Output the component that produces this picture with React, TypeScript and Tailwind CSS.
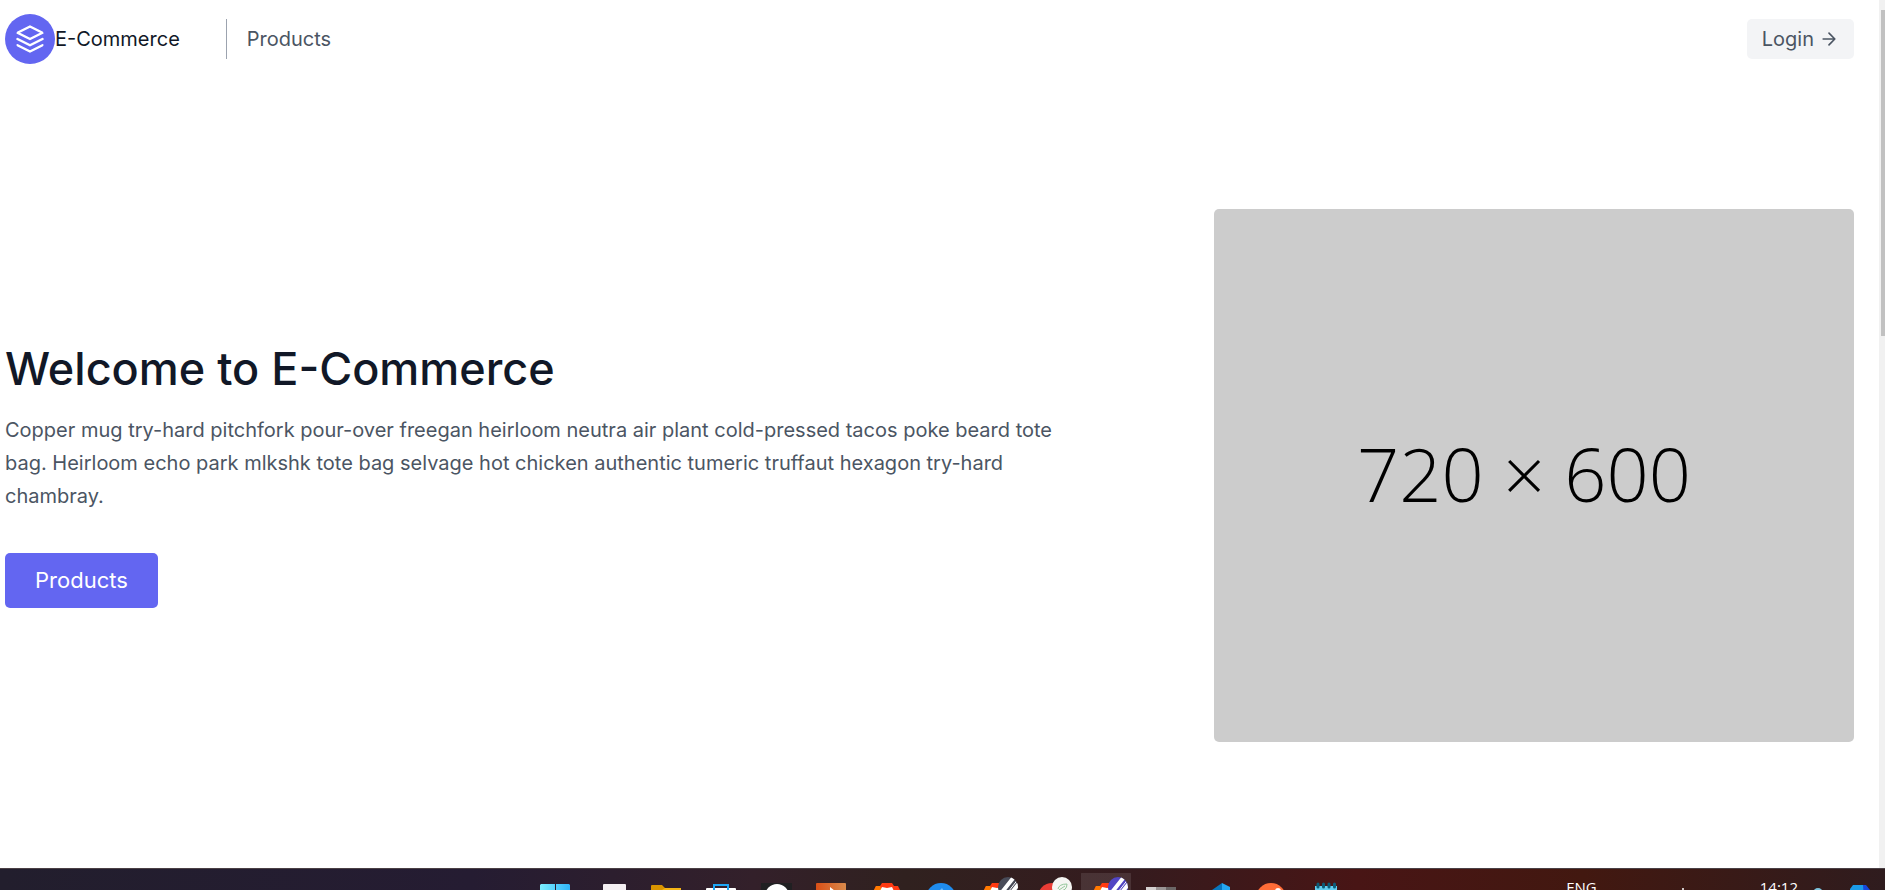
import type { ReactNode } from "react";

function Icon({ children }: { children: ReactNode }) {
  return (
    <svg width="50" height="50" viewBox="0 0 50 50" aria-hidden="true">
      {children}
    </svg>
  );
}

function Brave() {
  return (
    <g transform="translate(1 0)">
      <path d="M12 21l2-4h4l2-3h10l2 3h4l2 4-3 18-10 8-10-8z" fill="#ff3a12" />
      <path d="M12 21l2-4h4l2 4-6 4z" fill="#ff7a00" />
      <path d="M18 22l2-4 5 1 5-1 2 4-2 12-5 5-5-5z" fill="#fff" />
    </g>
  );
}

function StripedBadge({ id, color }: { id: string; color: string }) {
  return (
    <>
      <clipPath id={id}>
        <circle cx="37" cy="18" r="10" />
      </clipPath>
      <g clipPath={`url(#${id})`}>
        <rect x="27" y="8" width="20" height="20" fill={color} />
        <path d="M28 27L43 8M38 27L50 12" stroke="#fff" strokeWidth="4" />
        <path d="M34 27L48 9" stroke="#fff" strokeWidth="1" />
      </g>
    </>
  );
}

const apps: { name: string; active?: boolean; art: ReactNode }[] = [
  {
    name: "Start",
    art: (
      <>
        <defs>
          <linearGradient id="win" x1="0" x2="1">
            <stop offset="0" stopColor="#7df0ff" />
            <stop offset="1" stopColor="#30b5f8" />
          </linearGradient>
        </defs>
        <path d="M10 15h14v14H9V16zM25 15h13l1 1v13H25z" fill="url(#win)" />
      </>
    ),
  },
  { name: "Task view", art: <rect x="17" y="15" width="23" height="23" rx="1" fill="#f4eff2" /> },
  {
    name: "Files",
    art: (
      <>
        <path d="M10 17q0-1 1-1h10l3 3h15q1 0 1 2v18H10z" fill="#d99400" />
        <path d="M10 21h11l3-2h16v20H10z" fill="#f5b516" />
      </>
    ),
  },
  {
    name: "Store",
    art: (
      <>
        <path d="M10 20q0-1 1-1h28q1 0 1 1v20H10z" fill="#fff" />
        <path d="M18 21v-5h14v5" fill="none" stroke="#1ea7f5" strokeWidth="2" />
      </>
    ),
  },
  {
    name: "Chat",
    art: (
      <>
        <rect x="10" y="14" width="31" height="30" fill="#202022" />
        <circle cx="26" cy="27" r="12" fill="#fff" />
      </>
    ),
  },
  {
    name: "Player",
    art: (
      <>
        <defs>
          <linearGradient id="play" x1="0" x2="1">
            <stop offset="0" stopColor="#d94f16" />
            <stop offset="1" stopColor="#d88a4c" />
          </linearGradient>
        </defs>
        <rect x="10" y="14" width="30" height="30" rx="1" fill="url(#play)" />
        <path d="M24 18l9 7-9 7z" fill="#fff" />
      </>
    ),
  },
  { name: "Brave", art: <Brave /> },
  {
    name: "Messages",
    art: (
      <>
        <circle cx="25" cy="29" r="15" fill="#1f8cee" />
        <path d="M23 22l3-3 2 3z" fill="#6bbcff" />
      </>
    ),
  },
  {
    name: "Brave profile",
    art: (
      <>
        <Brave />
        <StripedBadge id="badge-gray" color="#484b58" />
      </>
    ),
  },
  {
    name: "Mail",
    art: (
      <>
        <circle cx="26" cy="28" r="14" fill="#ea3c35" />
        <circle cx="36" cy="18" r="10" fill="#f5f5f2" />
        <path d="M32 20q1-5 9-5 0 7-8 7M33 21l6-4" fill="none" stroke="#94c79a" />
      </>
    ),
  },
  {
    name: "Brave work profile",
    active: true,
    art: (
      <>
        <Brave />
        <StripedBadge id="badge-violet" color="#5145c4" />
      </>
    ),
  },
  {
    name: "Monitor",
    art: (
      <>
        <path d="M10 18h10v6H10z" fill="#d4d0d0" />
        <path d="M20 18h10v6H20z" fill="#9a9595" />
        <path d="M30 18h10v6H30z" fill="#6b6666" />
      </>
    ),
  },
  {
    name: "Editor",
    art: (
      <>
        <path d="M21 21l10-7v30z" fill="#0876bd" />
        <path d="M31 14l8 4v24l-8 4z" fill="#24a8f2" />
      </>
    ),
  },
  {
    name: "API client",
    art: (
      <>
        <circle cx="25" cy="29" r="15" fill="#ff6c37" />
        <circle cx="32" cy="22" r="3" fill="#fff" />
      </>
    ),
  },
  {
    name: "Notepad",
    art: (
      <>
        <rect x="14" y="17" width="22" height="24" fill="#62cdee" />
        <path d="M17 15v3M22.500 15v3M28 15v3M33.500 15v3" stroke="#0c5c78" strokeWidth="3" strokeLinecap="round" />
      </>
    ),
  },
];

function Header() {
  return (
    <header className="flex items-center pt-3.5">
      <a href="#home" className="flex items-center text-[20px] leading-7 text-[#111827]">
        <svg
          className="h-[50px] w-[50px] rounded-full bg-[#6366f1] p-2.5 text-white"
          viewBox="0 0 24 24"
          fill="none"
          stroke="currentColor"
          strokeWidth="2"
          strokeLinecap="round"
          strokeLinejoin="round"
          aria-hidden="true"
        >
          <path d="M12 2L2 7l10 5 10-5-10-5zM2 17l10 5 10-5M2 12l10 5 10-5" />
        </svg>
        E-Commerce
      </a>
      <nav className="ml-[46px] flex h-10 items-center border-l border-[#9ca3af] pl-5 text-[20px] text-[#4b5563]">
        <a href="#products">Products</a>
      </nav>
      <button className="ml-auto flex h-10 items-center rounded-[5px] bg-[#f3f4f6] px-[15px] text-[20px] text-[#4b5563]">
        Login
        <svg
          className="ml-[5px] h-5 w-5"
          viewBox="0 0 24 24"
          fill="none"
          stroke="currentColor"
          strokeWidth="2"
          strokeLinecap="round"
          strokeLinejoin="round"
          aria-hidden="true"
        >
          <path d="M5 12h14M12 5l7 7-7 7" />
        </svg>
      </button>
    </header>
  );
}

function Hero() {
  return (
    <main className="mt-[25px] flex items-center py-[120px]">
      <div className="flex flex-1 flex-col items-start pr-[120px]">
        <h1 className="mb-5 text-[45px] leading-[50px] font-medium text-[#111827]">Welcome to E-Commerce</h1>
        <p className="mb-10 text-[20px] leading-[33px] text-[#4b5563]">
          Copper mug try-hard pitchfork pour-over freegan heirloom neutra air plant cold-pressed tacos poke beard tote
          bag. Heirloom echo park mlkshk tote bag selvage hot chicken authentic tumeric truffaut hexagon try-hard
          chambray.
        </p>
        <button className="rounded-[5px] bg-[#6366f1] px-[30px] py-2.5 text-[22px] leading-[35px] text-white">
          Products
        </button>
      </div>
      <div className="flex aspect-[6/5] w-[640px] shrink-0 items-center justify-center rounded-[5px] bg-[#cccccc] pr-5 pb-1 font-['Open_Sans',sans-serif] text-[74px] font-light text-black">
        720 × 600
      </div>
    </main>
  );
}

function Taskbar() {
  return (
    <footer className="grid h-[22px] shrink-0 grid-cols-[1fr_auto_1fr] overflow-hidden border-t border-[#4a4045] bg-[linear-gradient(90deg,#221e2d_0%,#251c32_25%,#33202a_40%,#30211f_48%,#351b1e_60%,#481515_72%,#421810_84%,#2f1c1e_100%)] pr-[3px] font-['Open_Sans',sans-serif] text-[15px] leading-5 text-white">
      <div />
      <div className="flex gap-[5px]">
        {apps.map((app) => (
          <button
            key={app.name}
            aria-label={app.name}
            className={
              app.active
                ? "h-[50px] w-[50px] rounded-[5px] bg-[linear-gradient(transparent_4px,rgb(255_255_255/0.1)_4px)]"
                : "h-[50px] w-[50px]"
            }
          >
            <Icon>{app.art}</Icon>
          </button>
        ))}
      </div>
      <div className="flex items-start justify-end pt-2">
        <span>ENG</span>
        <svg className="ml-[84px]" width="4" height="14" aria-hidden="true">
          <circle cx="2" cy="12" r="1" fill="#fff" />
        </svg>
        <span className="ml-[75px]">14:12</span>
        <svg className="ml-3.5" width="14" height="20" viewBox="0 0 14 20" aria-hidden="true">
          <circle cx="6" cy="16" r="5" fill="#7cc4dd" />
        </svg>
        <svg className="mr-3 ml-6" width="20" height="20" viewBox="0 0 20 20" aria-hidden="true">
          <path d="M3 8h12l4 5v7H0v-8z" fill="#1b9be8" />
          <path d="M13 8h3l4 5v7h-6z" fill="#1647dc" />
        </svg>
      </div>
    </footer>
  );
}

export default function App() {
  return (
    <div className="flex h-screen flex-col overflow-hidden bg-white font-['Inter',sans-serif]">
      <div className="flex min-h-0 flex-1">
        <div className="min-w-0 flex-1 overflow-hidden pr-[25px] pl-[5px]">
          <Header />
          <Hero />
        </div>
        <div className="w-1.5 bg-[#f1f1f1] pt-2.5 pl-0.5">
          <div className="h-[38%] bg-[#c1c1c1]" />
        </div>
      </div>
      <Taskbar />
    </div>
  );
}
